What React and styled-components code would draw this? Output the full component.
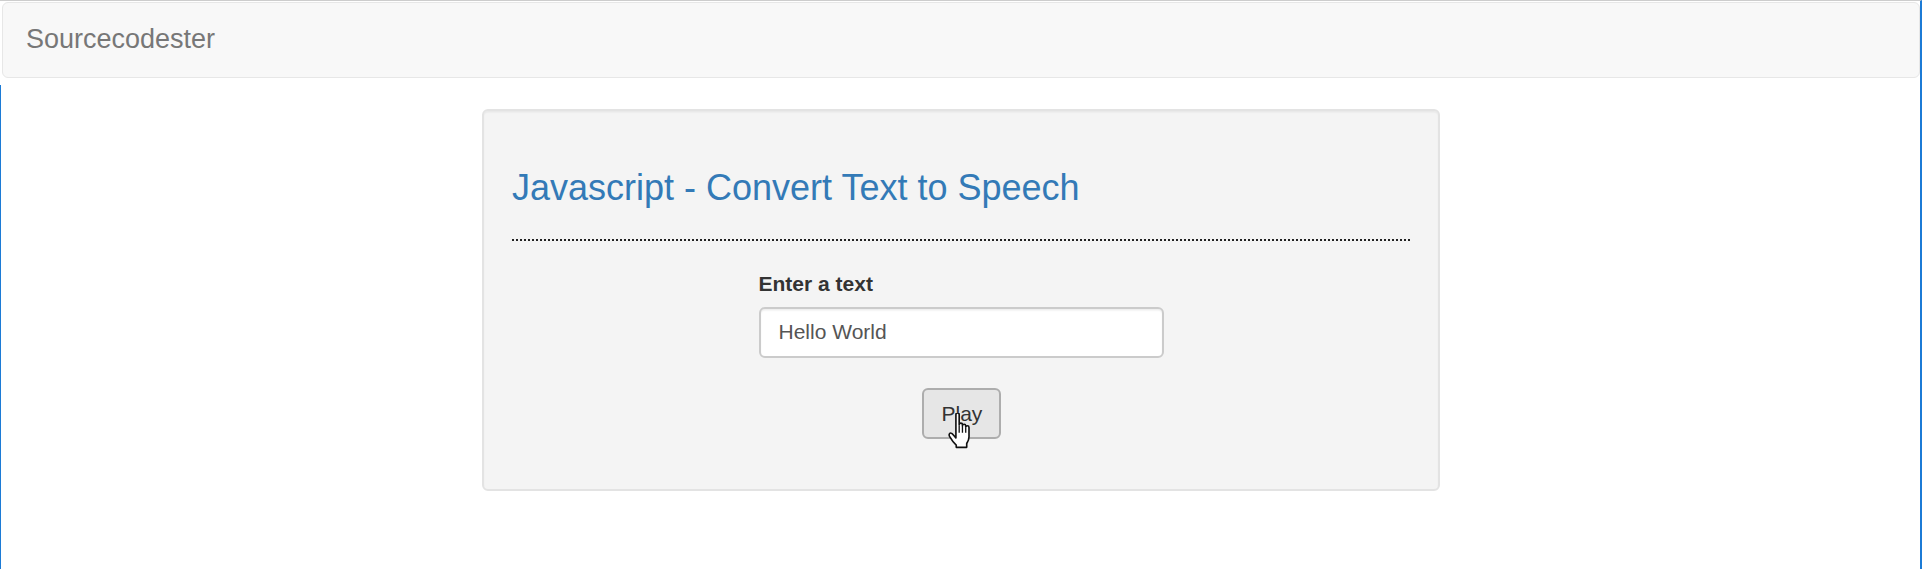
import React from 'react'
import styled, { createGlobalStyle } from 'styled-components'

const GlobalStyle = createGlobalStyle`
    html, body {
        margin: 0;
        padding: 0;
        background: #fff;
    }
    body {
        font-family: "Liberation Sans", Arial, Helvetica, sans-serif;
        color: #333;
    }
    * {
        box-sizing: border-box;
    }
`

const Page = styled.div`
    position: relative;
    min-height: 569px;
    padding-left: 2px;
    border-top: 1px solid #cdcdcd;
    border-right: 2px solid #1c7bd6;

    &::before {
        content: '';
        position: absolute;
        left: 0;
        top: 84px;
        bottom: 0;
        width: 1px;
        background: #1c7bd6;
    }
`

const Navbar = styled.nav`
    display: flex;
    align-items: flex-start;
    height: 76px;
    margin: 1px 0 31px;
    background: #f8f8f8;
    border: 1px solid #e7e7e7;
    border-radius: 6px;
`

const Brand = styled.a`
    padding: 21px 23px;
    font-size: 27px;
    line-height: 30px;
    color: #777;
    text-decoration: none;
`

const Well = styled.section`
    width: 958px;
    margin: 0 auto;
    padding: 28px;
    background: #f4f4f4;
    border: 2px solid #e3e3e3;
    border-radius: 6px;
    box-shadow: inset 0 1.5px 1.5px rgba(0, 0, 0, 0.05);
`

const Title = styled.h3`
    margin: 29px 0 0;
    font-size: 36px;
    font-weight: 500;
    line-height: 1.1;
    color: #337ab7;
`

const Divider = styled.hr`
    margin: 31px 0 28.5px;
    border: 0;
    border-top: 2px dotted #222;
`

const FormColumn = styled.div`
    width: 405px;
    margin: 0 auto;
    display: flex;
    flex-direction: column;
`

const Label = styled.label`
    display: block;
    margin-bottom: 7.5px;
    font-size: 21px;
    font-weight: bold;
    line-height: 30px;
    color: #333;
`

const TextInput = styled.input`
    display: block;
    width: 100%;
    height: 51px;
    padding: 9px 18px;
    font-family: inherit;
    font-size: 21px;
    color: #555;
    background: #fff;
    border: 2px solid #cbcbcb;
    border-radius: 6px;
    box-shadow: inset 0 1.5px 1.5px rgba(0, 0, 0, 0.075);
    outline: none;
`

const ButtonRow = styled.div`
    display: flex;
    justify-content: center;
    margin: 30px 0 22px;
`

const PlayButton = styled.button`
    position: relative;
    width: 79px;
    height: 51px;
    padding: 9px 18px;
    font-family: inherit;
    font-size: 21px;
    line-height: 1.42857;
    color: #333;
    background: #e6e6e6;
    border: 2px solid #adadad;
    border-radius: 6px;
    cursor: pointer;
`

const Cursor = styled.svg`
    position: absolute;
    left: 22px;
    top: 23px;
    width: 28px;
    height: 36px;
    pointer-events: none;
`

const HandCursor = () => (
  <Cursor viewBox="0 0 17 22">
    <path
      d="M6,1 C6,0.4 6.4,0 7,0 C7.6,0 8,0.4 8,1 L8,7.2 C8,6.6 8.4,6.2 9,6.2 C9.6,6.2 10,6.6 10,7.2 L10,7.8 C10,7.3 10.4,6.9 11,6.9 C11.6,6.9 12,7.3 12,7.9 L12,8.6 C12,8.1 12.4,7.8 13,7.8 C13.6,7.8 14,8.2 14,8.8 L14,14.5 C14,16.5 13.2,17.6 12.6,18.6 L12.6,21 L6.2,21 L6.2,19.6 C5,18.5 3.2,16.3 2.2,14.5 C1.6,13.4 1.9,12.2 2.8,12.2 C3.5,12.2 4.2,13 5,14 L6,15.2 Z"
      fill="#fff"
      stroke="#111"
      strokeWidth="1"
      strokeLinejoin="round"
    />
    <path d="M8,7.5 L8,12 M10,8 L10,12 M12,8.8 L12,12" stroke="#111" strokeWidth="0.8" fill="none" />
  </Cursor>
)

const App = () => {
  return (
    <>
      <GlobalStyle />
      <Page>
        <Navbar>
          <Brand href="#">Sourcecodester</Brand>
        </Navbar>
        <Well>
          <Title>Javascript - Convert Text to Speech</Title>
          <Divider />
          <FormColumn>
            <Label htmlFor="speech-text">Enter a text</Label>
            <TextInput id="speech-text" type="text" defaultValue="Hello World" />
            <ButtonRow>
              <PlayButton type="button">
                Play
                <HandCursor />
              </PlayButton>
            </ButtonRow>
          </FormColumn>
        </Well>
      </Page>
    </>
  )
}

export default App
